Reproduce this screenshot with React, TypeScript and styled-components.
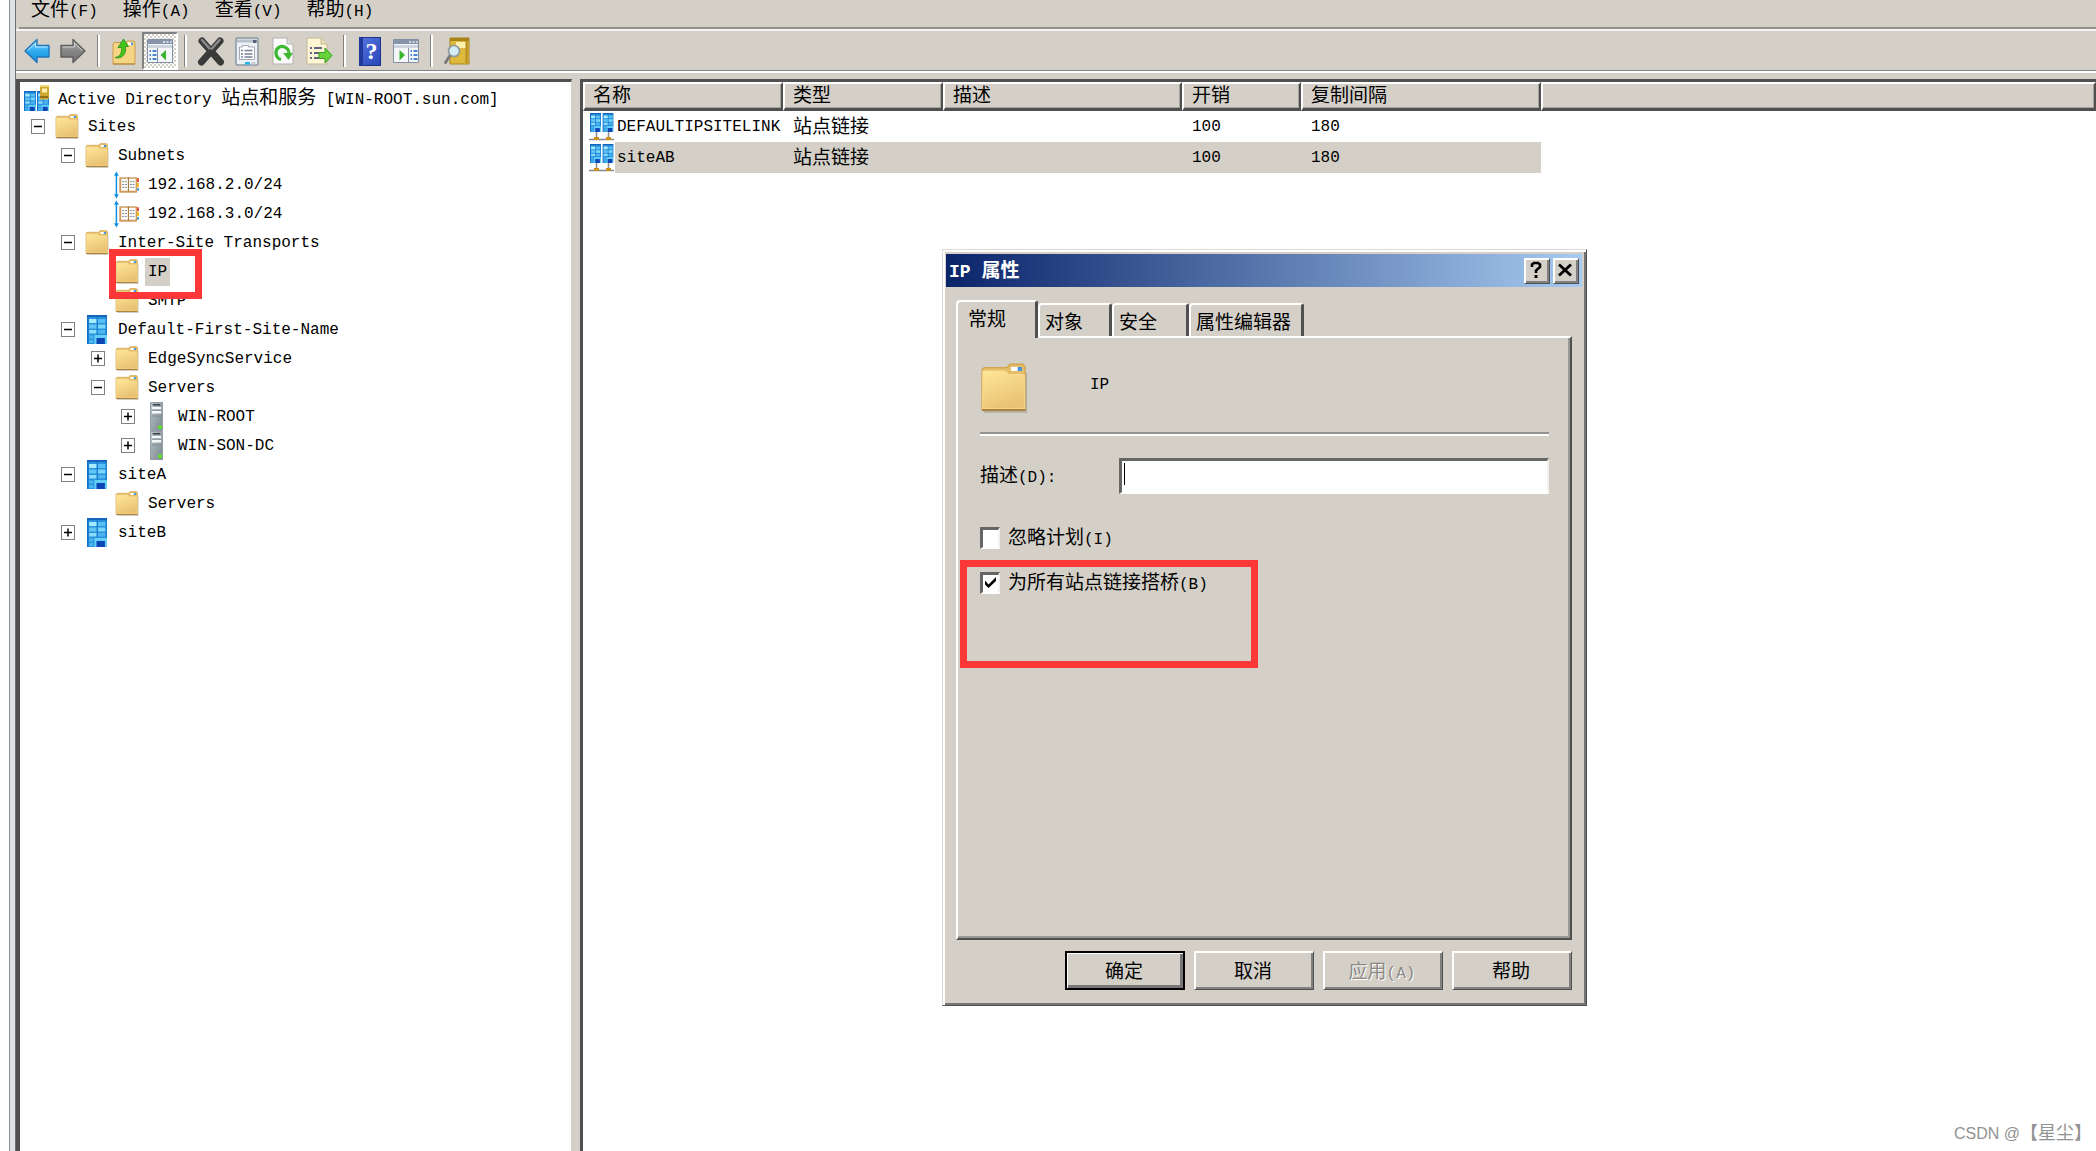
import React from "react";
import styled, { createGlobalStyle, css } from "styled-components";

const face = "#d4d0c8";
const shade = "#808080";
const dark = "#505050";
const red = "#fc3737";

const Global = createGlobalStyle`
  * { box-sizing: border-box; }
  html, body { margin: 0; height: 100%; overflow: hidden; background: #fff; }
  body, button, input {
    font-family: "Liberation Mono", "Noto Sans CJK SC", monospace;
    font-size: 16px;
    line-height: 20px;
    color: #000;
  }
`;

const Cjk = styled.span`
  font-family: "Noto Sans CJK SC", sans-serif;
  font-size: 19px;
  line-height: inherit;
`;

/* Full-width runs are set at twice the advance of the half-width ones. */
function Label({ text }: { text: string }) {
  return (
    <>
      {text
        .split(/([\u3000-\u9fff]+)/)
        .filter(Boolean)
        .map((part, i) => (/[\u3000-\u9fff]/.test(part) ? <Cjk key={i}>{part}</Cjk> : part))}
    </>
  );
}

/* ---------- window frame ---------- */

const Screen = styled.div`
  position: relative;
  display: flex;
  height: 100vh;
  overflow: hidden;
`;

const Edge = styled.div`
  flex: none;
  width: 7px;
  margin-left: 9px;
  background: #dfe1e5;
  border-left: 1px solid #8c8f94;
  border-right: 1px solid #70706e;
`;

const Main = styled.div`
  flex: 1;
  min-width: 0;
  display: flex;
  flex-direction: column;
  background: ${face};
`;

const MenuBar = styled.nav`
  flex: none;
  display: flex;
  align-items: flex-start;
  gap: 25px;
  height: 29px;
  margin-left: 3px;
  padding-left: 12px;
  border-bottom: 2px solid #94928e;
`;

const MenuButton = styled.button`
  padding: 0;
  border: 0;
  background: none;
  line-height: 16px;
  white-space: nowrap;
`;

const ToolBar = styled.div`
  flex: none;
  display: flex;
  align-items: center;
  height: 44px;
  padding-left: 3px;
  border-top: 2px solid #f6f5f3;
  border-bottom: 2px solid #fff;
  box-shadow: inset 0 -1px 0 ${shade};
`;

const ToolButton = styled.button<{ $pressed?: boolean }>`
  display: flex;
  align-items: center;
  justify-content: center;
  width: 36px;
  height: 38px;
  padding: 0;
  border: 2px solid transparent;
  background: none;
  ${(p) =>
    p.$pressed &&
    css`
      border-color: ${shade} #fff #fff ${shade};
      background: repeating-conic-gradient(#fff 0 25%, ${face} 0 50%) 0 0 / 4px 4px;
    `}
`;

const Separator = styled.span`
  width: 3px;
  height: 32px;
  margin: 0 6px;
  border-left: 1px solid ${shade};
  border-right: 2px solid #fff;
`;

const Panes = styled.div`
  flex: 1;
  min-height: 0;
  display: grid;
  grid-template-columns: 556px minmax(0, 1fr);
  gap: 8px;
  padding-top: 6px;
`;

const Pane = styled.section`
  min-width: 0;
  overflow: hidden;
  background: #fff;
  border-top: 3px solid ${dark};
  border-left: 3px solid ${dark};
`;

const TreePane = styled(Pane)`
  border-left-width: 4px;
  border-right: 1px solid ${face};
`;

/* ---------- tree ---------- */

const Tree = styled.ul`
  margin: 0;
  padding: 1px 0 0;
  list-style: none;
`;

const TreeRow = styled.li<{ $depth: number }>`
  position: relative;
  display: flex;
  align-items: center;
  gap: 9px;
  height: 29px;
  padding-left: ${(p) => (p.$depth ? 11 + (p.$depth - 1) * 30 : 4)}px;
  white-space: nowrap;
`;

const Toggle = styled.button<{ $hidden: boolean }>`
  display: flex;
  width: 14px;
  height: 15px;
  padding: 0;
  border: 1px solid ${shade};
  background: #fff;
  align-items: center;
  justify-content: center;
  visibility: ${(p) => (p.$hidden ? "hidden" : "visible")};
`;

const IconBox = styled.span`
  display: flex;
  flex: none;
  justify-content: center;
  width: 25px;
`;

const NodeName = styled.span<{ $selected?: boolean }>`
  line-height: 28px;
  ${(p) =>
    p.$selected &&
    css`
      margin-left: -3px;
      padding: 0 3px;
      background: ${face};
    `}
`;

const Marker = styled.div`
  position: absolute;
  z-index: 2;
  border: 7px solid ${red};
  pointer-events: none;
`;

const TreeMarker = styled(Marker)`
  left: 89px;
  top: -8px;
  width: 93px;
  height: 50px;
`;

/* ---------- list ---------- */

const List = styled.table`
  width: 100%;
  table-layout: fixed;
  border-collapse: separate;
  border-spacing: 0;
`;

const HeadCell = styled.th`
  height: 29px;
  padding: 0 0 0 8px;
  text-align: left;
  font-weight: 400;
  background: ${face};
  border: solid;
  border-width: 2px 2px 3px 2px;
  border-color: #fff ${dark} ${dark} #fff;
  box-shadow: inset -1px -1px 0 #a4a19b;
  white-space: nowrap;
`;

const Cell = styled.td<{ $selected?: boolean }>`
  height: 31px;
  padding: 0 0 0 10px;
  white-space: nowrap;
  background: ${(p) => (p.$selected ? face : "#fff")};
`;

const NameCell = styled(Cell)`
  padding-left: 6px;
  background: linear-gradient(to right, #fff 32px, ${(p) => (p.$selected ? face : "#fff")} 32px);
`;

const NameFlex = styled.span`
  display: flex;
  align-items: center;
  gap: 3px;
`;

/* ---------- dialog ---------- */

const Dialog = styled.div`
  position: absolute;
  left: 942px;
  top: 249px;
  z-index: 1;
  width: 645px;
  padding: 4px 4px 15px 3px;
  background: ${face};
  border: 1px solid;
  border-color: #dddad4 ${dark} ${dark} #dddad4;
  box-shadow: inset 2px 2px 0 #fff, inset -2px -2px 0 #757575;
`;

const TitleBar = styled.header`
  display: flex;
  align-items: center;
  gap: 3px;
  height: 33px;
  padding: 0 3px;
  background: linear-gradient(to right, #0a246a, #a6caf0);
`;

const Title = styled.h1`
  flex: 1;
  margin: 0;
  font-size: 18px;
  line-height: 24px;
  font-weight: 700;
  color: #fff;
`;

const bevel = css`
  background: ${face};
  border: 1px solid;
  border-color: #fff ${dark} ${dark} #fff;
  box-shadow: inset 1px 1px 0 #fff, inset -2px -2px 0 ${shade};
`;

const CaptionButton = styled.button`
  ${bevel}
  display: flex;
  align-items: center;
  justify-content: center;
  width: 26px;
  height: 26px;
  padding: 0 2px 2px 0;
`;

const DialogBody = styled.div`
  padding: 13px 10px 0;
`;

const Tabs = styled.div`
  display: flex;
  align-items: flex-end;
`;

const Tab = styled.button<{ $active?: boolean; $width: number }>`
  width: ${(p) => p.$width}px;
  height: 33px;
  padding: 4px 0 0 5px;
  text-align: left;
  background: ${face};
  border: solid;
  border-width: 2px 3px 0 2px;
  border-color: #fff ${dark} #fff #fff;
  border-radius: 4px 3px 0 0;
  ${(p) =>
    p.$active &&
    css`
      position: relative;
      height: 38px;
      margin-bottom: -2px;
      padding: 0 0 0 10px;
    `}
`;

const Panel = styled.div`
  display: flex;
  flex-direction: column;
  min-height: 604px;
  padding: 25px 21px 0 22px;
  border: 2px solid;
  border-color: #fff ${dark} ${dark} #fff;
  box-shadow: inset -2px -2px 0 #9a9893;
`;

const Identity = styled.div`
  display: flex;
  align-items: flex-start;
  gap: 62px;
  height: 71px;
  border-bottom: 2px solid #94928e;
  box-shadow: 0 2px 0 #fff;
`;

const IdentityName = styled.span`
  padding-top: 12px;
`;

const Field = styled.div`
  display: grid;
  grid-template-columns: 139px minmax(0, 1fr);
  align-items: center;
  margin-top: 24px;
`;

const InputWrap = styled.div`
  position: relative;
`;

const sunken = css`
  background: #fff;
  border: solid;
  border-width: 3px 2px 2px 3px;
  border-color: #666 #f3f2ef #fff #666;
`;

const TextInput = styled.input`
  ${sunken}
  display: block;
  width: 100%;
  height: 36px;
  padding: 0 4px;
  outline: none;
`;

const Caret = styled.span`
  position: absolute;
  left: 5px;
  top: 5px;
  width: 1px;
  height: 22px;
  background: #000;
`;

const Options = styled.div`
  display: flex;
  flex-direction: column;
  gap: 22px;
  margin-top: 32px;
`;

const Option = styled.label`
  position: relative;
  display: flex;
  align-items: center;
  gap: 8px;
  height: 23px;
`;

const CheckInput = styled.input`
  ${sunken}
  appearance: none;
  width: 20px;
  height: 22px;
  margin: 0;
`;

const Tick = styled.svg`
  position: absolute;
  left: 4px;
  top: 5px;
  pointer-events: none;
`;

const OptionMarker = styled(Marker)`
  left: -20px;
  top: -11px;
  width: 298px;
  height: 108px;
`;

const Actions = styled.footer`
  display: flex;
  justify-content: flex-end;
  gap: 9px;
  padding-top: 11px;
`;

const ActionButton = styled.button<{ $primary?: boolean }>`
  ${bevel}
  width: 120px;
  height: 39px;
  padding: 2px 2px 0 0;
  &:disabled {
    color: #8a8884;
    text-shadow: 1px 1px 0 #fff;
  }
  ${(p) =>
    p.$primary &&
    css`
      border: 2px solid #000;
      box-shadow: inset 1px 1px 0 #fff, inset -3px -3px 0 #777;
    `}
`;

const Watermark = styled.div`
  position: absolute;
  right: 4px;
  bottom: 7px;
  font-family: "Liberation Sans", "Noto Sans CJK SC", sans-serif;
  color: #929292;
  white-space: nowrap;
`;

const WatermarkName = styled.span`
  font-family: "Noto Sans CJK SC", sans-serif;
  font-size: 18px;
`;

/* ---------- icons ---------- */

function FolderIcon({ width = 24, height = 25 }: { width?: number; height?: number }) {
  return (
    <svg width={width} height={height} viewBox="0 0 24 25" aria-hidden="true">
      <defs>
        <linearGradient id="folder" x1="0" y1="0" x2="0.4" y2="1">
          <stop offset="0" stopColor="#ffe79a" />
          <stop offset="1" stopColor="#e9c274" />
        </linearGradient>
      </defs>
      <path d="M2 24.4h21V5" fill="none" stroke="#8a8270" strokeOpacity=".45" />
      <path d="M1 23V3.500L2 2.300h11.500L15 .600h6.500l1 1.200V23z" fill="#e5bd68" stroke="#d2a750" strokeWidth=".7" />
      <path d="M1.400 23V4h11.200l2 1.800h7.600V23z" fill="url(#folder)" stroke="#f8dc94" strokeWidth=".5" />
      <path d="M15.500 2h5.500v2h-5.500z" fill="#fff" />
      <path d="M18.800 2H21v2h-2.200z" fill="#4b93dc" />
      <path d="M1 23.500h21.700" stroke="#ab8442" strokeWidth="1" />
    </svg>
  );
}

function BuildingArt() {
  return (
    <>
      <path d="M0 0h19v29H0z" fill="#2a93df" />
      <path d="M0 0h19v2H0z" fill="#1566bb" />
      <path d="M0 2h1.500v27H0z" fill="#1570c4" />
      <path d="M9 2h1.500v18H9zM17.500 2H19v18h-1.500z" fill="#1b7fd2" />
      <path d="M2 4h7v4H2z" fill="#a6ecfd" />
      <path d="M10.500 4h7v4h-7z" fill="#58c0f3" />
      <path d="M2 9.500h7v4H2z" fill="#62c6f5" />
      <path d="M10.500 9.500h7v4h-7z" fill="#7ad6f8" />
      <path d="M2 15h7v3.500H2z" fill="#8adcf9" />
      <path d="M10.500 15h7v3.500h-7z" fill="#4cb4ee" />
      <path d="M2 20.500h4v3H2zM2 25h4v3H2z" fill="#4db6ee" />
      <path d="M7 20h12v9H7z" fill="#62cff8" />
      <path d="M9 23h8v6H9z" fill="#0c45b6" />
    </>
  );
}

function SiteIcon() {
  return (
    <svg width="20" height="29" viewBox="0 0 19 29" preserveAspectRatio="none" aria-hidden="true">
      <BuildingArt />
    </svg>
  );
}

function RootIcon() {
  return (
    <svg width="25" height="26" viewBox="0 0 25 26" aria-hidden="true">
      <svg x="0" y="6" width="12" height="20" viewBox="0 0 19 29" preserveAspectRatio="none">
        <BuildingArt />
      </svg>
      <svg x="13" y="6" width="12" height="20" viewBox="0 0 19 29" preserveAspectRatio="none">
        <BuildingArt />
      </svg>
      <path d="M16 0h9v13l-2 1.500h-7z" fill="#cfa62f" />
      <path d="M16 0h9v2h-9z" fill="#f0d878" />
      <path d="M18 3.500h5v4h-5z" fill="#fff1b0" />
      <path d="M16 11h8v2h-8z" fill="#93711a" />
    </svg>
  );
}

function LinkIcon() {
  return (
    <svg width="25" height="28" viewBox="0 0 25 28" aria-hidden="true">
      <path d="M7.500 19v6M19.500 19v6" stroke="#8c8c94" strokeWidth="1.500" />
      <path d="M0 26.500h25" stroke="#85858f" strokeWidth="1.500" />
      <path d="M5 24h5v3H5zM17 24h5v3h-5z" fill="#cc9016" />
      <svg x="1" y="0" width="11" height="19" viewBox="0 0 19 29" preserveAspectRatio="none">
        <BuildingArt />
      </svg>
      <svg x="13.500" y="0" width="11" height="19" viewBox="0 0 19 29" preserveAspectRatio="none">
        <BuildingArt />
      </svg>
    </svg>
  );
}

function SubnetIcon() {
  return (
    <svg width="26" height="28" viewBox="0 0 26 28" aria-hidden="true">
      <path d="M2.500 2v24" stroke="#1192e0" strokeWidth="1.600" />
      <path d="M2.500 0L5 4.500H0zM2.500 28L5 23.500H0z" fill="#1192e0" />
      <path d="M23 7h3v4h-3z" fill="#e24b3a" />
      <path d="M23 12h3v4h-3z" fill="#f0c01c" />
      <path d="M23 17h3v3h-3z" fill="#4a9fdc" />
      <path d="M5.500 6h18.500v16H5.500z" fill="#cf9a5c" />
      <path d="M7.500 7.500h7v12.500h-7zM15.500 7.500h7v12.500h-7z" fill="#fffdf8" />
      <path d="M15 6v15" stroke="#a5773f" />
      <path d="M8.500 10.500h5M8.500 13.500h5M8.500 16.500h5M16.500 10.500h5M16.500 13.500h5M16.500 16.500h5" stroke="#73849c" strokeDasharray="2 .8" />
    </svg>
  );
}

function ServerIcon() {
  return (
    <svg width="13" height="29" viewBox="0 0 14 29" preserveAspectRatio="none" aria-hidden="true">
      <defs>
        <linearGradient id="server" x1="0" y1="0" x2="1" y2="1">
          <stop offset="0" stopColor="#bcc6cb" />
          <stop offset="1" stopColor="#78868e" />
        </linearGradient>
      </defs>
      <path d="M.5.500h13v28H.500z" fill="url(#server)" stroke="#8f9aa0" />
      <path d="M3 2h8v1.500H3z" fill="#37434b" />
      <path d="M2 5h10v2.500H2zM2 9h10v2.500H2z" fill="#f5f8f9" />
      <path d="M2 8h10M2 14h10" stroke="#7f8c93" />
      <path d="M9 23.500h3.500v3.500H9z" fill="#57ee18" />
    </svg>
  );
}

type NodeKind = "root" | "folder" | "subnet" | "site" | "server";

const nodeIcons: Record<NodeKind, React.ReactNode> = {
  root: <RootIcon />,
  folder: <FolderIcon />,
  subnet: <SubnetIcon />,
  site: <SiteIcon />,
  server: <ServerIcon />,
};

function ArrowIcon({ back }: { back?: boolean }) {
  const id = back ? "arrowBack" : "arrowNext";
  return (
    <svg width="26" height="26" viewBox="0 0 26 26" aria-hidden="true">
      <defs>
        <linearGradient id={id} x1="0" y1="0" x2="0" y2="1">
          <stop offset="0" stopColor={back ? "#8ad6fb" : "#b4b4b4"} />
          <stop offset=".5" stopColor={back ? "#2fabf0" : "#858585"} />
          <stop offset="1" stopColor={back ? "#138bdc" : "#707070"} />
        </linearGradient>
      </defs>
      <path
        d={back ? "M1 13L13 1.500V7.500H25V19H13V24.500z" : "M25 13L13 1.500V7.500H1V19H13V24.500z"}
        fill={`url(#${id})`}
        stroke={back ? "#2276b8" : "#5e5e5e"}
        strokeWidth="1.400"
        strokeLinejoin="round"
      />
      <path
        d={back ? "M3.500 12.500L11.500 5V9H23.500" : "M2.500 9H14.500V5L22.500 12.500"}
        fill="none"
        stroke={back ? "#b9e9ff" : "#cfcfcf"}
      />
    </svg>
  );
}

function UpIcon() {
  return (
    <svg width="26" height="28" viewBox="0 0 26 28" aria-hidden="true">
      <path d="M2 27V7l1-1.500h12L16.500 4H23l1 1.500V27z" fill="#f5d484" stroke="#c99d48" />
      <path d="M17 5.500h5v2.500h-5z" fill="#fff" />
      <path d="M20 5.500h2v2.500h-2z" fill="#4b93dc" />
      <path d="M4 20.500C9 20 11 16 10.500 10.500H7L12.500 2l5 7.500H14.500C15.500 17 11 22.500 4 20.500z" fill="#44c51e" stroke="#228c12" strokeWidth=".8" />
      <path d="M2 27h22" stroke="#ad8238" />
    </svg>
  );
}

function PaneIcon({ flipped }: { flipped?: boolean }) {
  return (
    <svg width="26" height="24" viewBox="0 0 26 24" aria-hidden="true">
      <path d="M.5.500h25v23H.500z" fill="#f4f6f9" stroke="#8490a3" />
      <path d="M1 1h24v4H1z" fill="#8693a8" />
      <path d="M1 6h24v3H1z" fill="#ccd4e0" />
      <path d="M16 3h2M19.500 3h2M23 3h1.500" stroke="#edf2fa" strokeWidth="1.500" />
      {flipped ? (
        <>
          <path d="M15.500 9v14" stroke="#8490a3" />
          <path d="M6.500 11l5.500 5-5.500 5.500z" fill="#39b42d" />
          <path d="M17.500 12h1.500M17.500 16h1.500M17.500 20h1.500M20.500 12h4M20.500 16h4M20.500 20h4" stroke="#4b86c8" strokeWidth="1.800" />
        </>
      ) : (
        <>
          <path d="M10.500 9v14" stroke="#8490a3" />
          <path d="M19 11l-5.500 5 5.500 5.500z" fill="#39b42d" />
          <path d="M2.500 12h1.500M2.500 16h1.500M2.500 20h1.500M5.500 12h4M5.500 16h4M5.500 20h4" stroke="#4b86c8" strokeWidth="1.800" />
        </>
      )}
    </svg>
  );
}

function DeleteIcon() {
  return (
    <svg width="28" height="30" viewBox="0 0 28 30" aria-hidden="true">
      <path d="M5 5L23.500 26M23 5L4.500 26" stroke="#3a3a3a" strokeWidth="7" strokeLinecap="round" />
      <path d="M5 4L12.500 12.500M22.500 4L15 12.500" stroke="#8b8b8b" strokeWidth="2.500" strokeLinecap="round" />
    </svg>
  );
}

function PropertiesIcon() {
  return (
    <svg width="24" height="29" viewBox="0 0 24 29" aria-hidden="true">
      <path d="M1 2l1-1h20l1 1v25l-1 1H2l-1-1z" fill="#edf0f4" stroke="#8c95a2" strokeWidth="1.500" />
      <path d="M2 4h20" stroke="#b6bfcb" strokeWidth="3" />
      <path d="M18 3h3.500v3H18z" fill="#526078" />
      <path d="M4.500 10h3V8.500h6V10h6v12.500h-15z" fill="#fff" stroke="#a3aab5" />
      <path d="M6 13.500h2M6 17h2M6 20h2M9.500 13.500h8M9.500 17h8M9.500 20h8" stroke="#75839a" strokeWidth="1.300" />
      <path d="M10 25h5v2.500h-5z" fill="#22b6ec" />
      <path d="M16.500 25h4v2.500h-4z" fill="#c9ced6" />
    </svg>
  );
}

function RefreshIcon() {
  return (
    <svg width="22" height="28" viewBox="0 0 22 28" aria-hidden="true">
      <path d="M1 1h14l6 6v20H1z" fill="#fbfbfb" stroke="#b3b1ac" />
      <path d="M15 1v6h6" fill="#dedede" stroke="#b3b1ac" />
      <path d="M9 22.500C3.500 21 2.500 14 6 11S16.500 9.500 17 16" fill="none" stroke="#3fb834" strokeWidth="3.200" />
      <path d="M11 16h10L16.500 23z" fill="#3fb834" />
    </svg>
  );
}

function ExportIcon() {
  return (
    <svg width="27" height="28" viewBox="0 0 27 28" aria-hidden="true">
      <path d="M1 1h14l6 6v20H1z" fill="#fdf5d4" stroke="#c0b896" />
      <path d="M15 1v6h6" fill="#e9dfb8" stroke="#c0b896" />
      <path d="M4 11h2M4 16h2M4 21h2M8 11h8M8 16h6M8 21h6" stroke="#646480" strokeWidth="1.800" />
      <path d="M13 15.500h6v-4.500l7 7.500-7 7.500v-4.500h-6z" fill="#66d33a" stroke="#39a01f" />
    </svg>
  );
}

const HelpBadge = styled.span`
  display: block;
  width: 22px;
  height: 29px;
  border: 1px solid #1d328c;
  border-left: 4px solid #22399b;
  background: linear-gradient(135deg, #5272dd, #2947b8);
  font: 700 24px/27px "Liberation Serif", serif;
  color: #fff;
  text-align: center;
`;

function FindIcon() {
  return (
    <svg width="26" height="28" viewBox="0 0 26 28" aria-hidden="true">
      <path d="M6 1h19v26H6z" fill="#dfb93d" stroke="#a98522" />
      <path d="M6 1h19v3H6z" fill="#a88318" />
      <path d="M12 5h10v6H12z" fill="#fff0ad" />
      <path d="M22.500 4v22" stroke="#b58d22" strokeWidth="2" />
      <path d="M6 18.500L1.500 25.500" stroke="#777" strokeWidth="2.800" strokeLinecap="round" />
      <circle cx="10" cy="14" r="5.500" fill="#d5edf5" stroke="#8b989d" strokeWidth="1.600" />
    </svg>
  );
}

/* ---------- data ---------- */

const menus = ["文件(F)", "操作(A)", "查看(V)", "帮助(H)"];

const tools: { name: string; icon: React.ReactNode; pressed?: boolean }[][] = [
  [
    { name: "后退", icon: <ArrowIcon back /> },
    { name: "前进", icon: <ArrowIcon /> },
  ],
  [
    { name: "上移一级", icon: <UpIcon /> },
    { name: "显示/隐藏控制台树", icon: <PaneIcon />, pressed: true },
  ],
  [
    { name: "删除", icon: <DeleteIcon /> },
    { name: "属性", icon: <PropertiesIcon /> },
    { name: "刷新", icon: <RefreshIcon /> },
    { name: "导出列表", icon: <ExportIcon /> },
  ],
  [
    { name: "帮助", icon: <HelpBadge>?</HelpBadge> },
    { name: "显示/隐藏操作窗格", icon: <PaneIcon flipped /> },
  ],
  [{ name: "查找", icon: <FindIcon /> }],
];

interface TreeNode {
  depth: number;
  kind: NodeKind;
  name: string;
  open?: boolean;
  selected?: boolean;
}

const nodes: TreeNode[] = [
  { depth: 0, kind: "root", name: "Active Directory 站点和服务 [WIN-ROOT.sun.com]" },
  { depth: 1, kind: "folder", name: "Sites", open: true },
  { depth: 2, kind: "folder", name: "Subnets", open: true },
  { depth: 3, kind: "subnet", name: "192.168.2.0/24" },
  { depth: 3, kind: "subnet", name: "192.168.3.0/24" },
  { depth: 2, kind: "folder", name: "Inter-Site Transports", open: true },
  { depth: 3, kind: "folder", name: "IP", selected: true },
  { depth: 3, kind: "folder", name: "SMTP" },
  { depth: 2, kind: "site", name: "Default-First-Site-Name", open: true },
  { depth: 3, kind: "folder", name: "EdgeSyncService", open: false },
  { depth: 3, kind: "folder", name: "Servers", open: true },
  { depth: 4, kind: "server", name: "WIN-ROOT", open: false },
  { depth: 4, kind: "server", name: "WIN-SON-DC", open: false },
  { depth: 2, kind: "site", name: "siteA", open: true },
  { depth: 3, kind: "folder", name: "Servers" },
  { depth: 2, kind: "site", name: "siteB", open: false },
];

const columns = [
  { name: "名称", width: 200 },
  { name: "类型", width: 160 },
  { name: "描述", width: 239 },
  { name: "开销", width: 119 },
  { name: "复制间隔", width: 240 },
];

const links = [
  { name: "DEFAULTIPSITELINK", type: "站点链接", note: "", cost: "100", every: "180", selected: false },
  { name: "siteAB", type: "站点链接", note: "", cost: "100", every: "180", selected: true },
];

const tabs = [
  { name: "常规", width: 82, active: true },
  { name: "对象", width: 74 },
  { name: "安全", width: 77 },
  { name: "属性编辑器", width: 115 },
];

/* ---------- page ---------- */

function PropertiesDialog() {
  return (
    <Dialog role="dialog" aria-labelledby="dialog-title">
      <TitleBar>
        <Title id="dialog-title">
          <Label text="IP 属性" />
        </Title>
        <CaptionButton aria-label="帮助">
          <svg width="12" height="18" viewBox="0 0 12 18" aria-hidden="true">
            <path d="M2 6V3.500L4 2h4l2 1.500V6L6 9.500V12" fill="none" stroke="#000" strokeWidth="2.600" />
            <path d="M4.500 14h3v3h-3z" />
          </svg>
        </CaptionButton>
        <CaptionButton aria-label="关闭">
          <svg width="14" height="14" viewBox="0 0 14 14" aria-hidden="true">
            <path d="M1 1.500L13 12.500M13 1.500L1 12.500" stroke="#000" strokeWidth="2.800" />
          </svg>
        </CaptionButton>
      </TitleBar>
      <DialogBody>
        <Tabs role="tablist">
          {tabs.map((t) => (
            <Tab key={t.name} role="tab" aria-selected={!!t.active} $active={t.active} $width={t.width}>
              <Label text={t.name} />
            </Tab>
          ))}
        </Tabs>
        <Panel role="tabpanel">
          <Identity>
            <FolderIcon width={48} height={50} />
            <IdentityName>IP</IdentityName>
          </Identity>
          <Field>
            <label htmlFor="description">
              <Label text="描述(D):" />
            </label>
            <InputWrap>
              <TextInput id="description" type="text" />
              <Caret />
            </InputWrap>
          </Field>
          <Options>
            <Option>
              <CheckInput type="checkbox" />
              <span>
                <Label text="忽略计划(I)" />
              </span>
            </Option>
            <Option>
              <CheckInput type="checkbox" defaultChecked />
              <Tick width="13" height="13" viewBox="0 0 13 13" aria-hidden="true">
                <path d="M1 4.500L4.500 8.500L12 1V5L4.500 12L1 8.500z" />
              </Tick>
              <span>
                <Label text="为所有站点链接搭桥(B)" />
              </span>
              <OptionMarker />
            </Option>
          </Options>
        </Panel>
        <Actions>
          <ActionButton $primary>
            <Label text="确定" />
          </ActionButton>
          <ActionButton>
            <Label text="取消" />
          </ActionButton>
          <ActionButton disabled>
            <Label text="应用(A)" />
          </ActionButton>
          <ActionButton>
            <Label text="帮助" />
          </ActionButton>
        </Actions>
      </DialogBody>
    </Dialog>
  );
}

export default function App() {
  return (
    <Screen>
      <Global />
      <Edge />
      <Main>
        <MenuBar>
          {menus.map((m) => (
            <MenuButton key={m}>
              <Label text={m} />
            </MenuButton>
          ))}
        </MenuBar>
        <ToolBar role="toolbar">
          {tools.map((group, i) => (
            <React.Fragment key={i}>
              {i > 0 && <Separator />}
              {group.map((t) => (
                <ToolButton key={t.name} aria-label={t.name} $pressed={t.pressed}>
                  {t.icon}
                </ToolButton>
              ))}
            </React.Fragment>
          ))}
        </ToolBar>
        <Panes>
          <TreePane>
            <Tree>
              {nodes.map((n, i) => (
                <TreeRow key={i} $depth={n.depth}>
                  {n.depth > 0 && (
                    <Toggle $hidden={n.open === undefined} aria-label={n.open ? "折叠" : "展开"}>
                      <svg width="8" height="9" viewBox="0 0 8 9" aria-hidden="true">
                        <path d={n.open ? "M0 4.500h8" : "M0 4.500h8M4 .500v8"} stroke="#000" strokeWidth="1.500" />
                      </svg>
                    </Toggle>
                  )}
                  <IconBox>{nodeIcons[n.kind]}</IconBox>
                  <NodeName $selected={n.selected}>
                    <Label text={n.name} />
                  </NodeName>
                  {n.selected && <TreeMarker />}
                </TreeRow>
              ))}
            </Tree>
          </TreePane>
          <Pane>
            <List>
              <colgroup>
                {columns.map((c) => (
                  <col key={c.name} width={c.width} />
                ))}
                <col />
              </colgroup>
              <thead>
                <tr>
                  {columns.map((c) => (
                    <HeadCell key={c.name} scope="col">
                      <Label text={c.name} />
                    </HeadCell>
                  ))}
                  <HeadCell as="td" />
                </tr>
              </thead>
              <tbody>
                {links.map((l) => (
                  <tr key={l.name}>
                    <NameCell $selected={l.selected}>
                      <NameFlex>
                        <LinkIcon />
                        {l.name}
                      </NameFlex>
                    </NameCell>
                    <Cell $selected={l.selected}>
                      <Label text={l.type} />
                    </Cell>
                    <Cell $selected={l.selected}>{l.note}</Cell>
                    <Cell $selected={l.selected}>{l.cost}</Cell>
                    <Cell $selected={l.selected}>{l.every}</Cell>
                    <Cell />
                  </tr>
                ))}
              </tbody>
            </List>
          </Pane>
        </Panes>
      </Main>
      <PropertiesDialog />
      <Watermark>
        CSDN @<WatermarkName>【星尘】</WatermarkName>
      </Watermark>
    </Screen>
  );
}
